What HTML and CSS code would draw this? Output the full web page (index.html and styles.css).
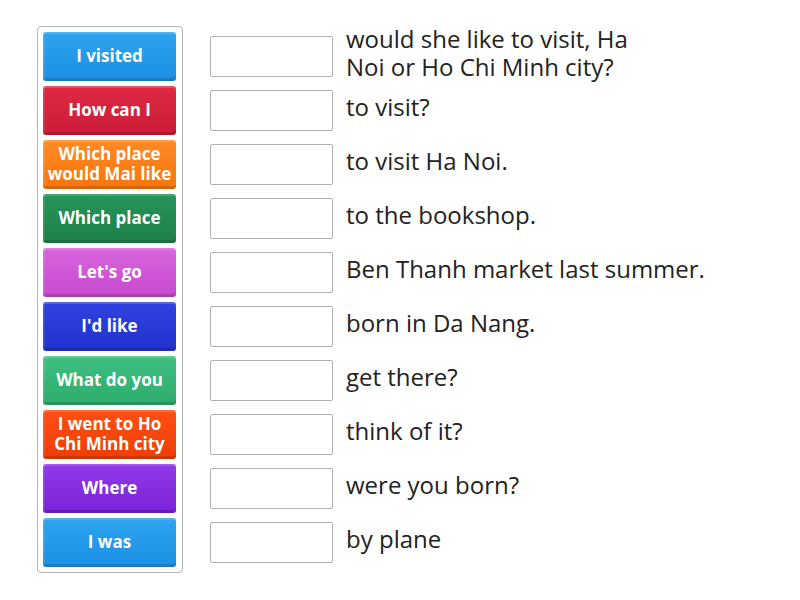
FILE: index.html
```html
<!DOCTYPE html>
<html>
<head>
<meta charset="utf-8">
<link rel="stylesheet" href="styles.css">
</head>
<body>
<div class="page">
  <div class="bank">
    <div class="tile blue">I visited</div>
    <div class="tile red">How can I</div>
    <div class="tile orange">Which place would Mai like</div>
    <div class="tile green">Which place</div>
    <div class="tile pink">Let's go</div>
    <div class="tile navy">I'd like</div>
    <div class="tile mint">What do you</div>
    <div class="tile flame">I went to Ho Chi Minh city</div>
    <div class="tile purple">Where</div>
    <div class="tile blue">I was</div>
  </div>
  <div class="rows">
    <div class="row"><div class="slot"></div><div class="phrase">would she like to visit, Ha<br>Noi or Ho Chi Minh city?</div></div>
    <div class="row"><div class="slot"></div><div class="phrase">to visit?</div></div>
    <div class="row"><div class="slot"></div><div class="phrase">to visit Ha Noi.</div></div>
    <div class="row"><div class="slot"></div><div class="phrase">to the bookshop.</div></div>
    <div class="row"><div class="slot"></div><div class="phrase">Ben Thanh market last summer.</div></div>
    <div class="row"><div class="slot"></div><div class="phrase">born in Da Nang.</div></div>
    <div class="row"><div class="slot"></div><div class="phrase">get there?</div></div>
    <div class="row"><div class="slot"></div><div class="phrase">think of it?</div></div>
    <div class="row"><div class="slot"></div><div class="phrase">were you born?</div></div>
    <div class="row"><div class="slot"></div><div class="phrase">by plane</div></div>
  </div>
</div>
</body>
</html>
```
FILE: styles.css
```css
html, body {
  margin: 0;
  padding: 0;
  background: #ffffff;
}
body {
  font-family: "Open Sans", "Liberation Sans", sans-serif;
  color: #222222;
}
.page {
  display: flex;
  align-items: flex-start;
  padding: 26px 0 0 37px;
}
.bank {
  display: flex;
  flex-direction: column;
  gap: 5px;
  padding: 5px 6px 5px 5px;
  border: 1px solid #b4b4b4;
  border-radius: 4px;
  width: 133px;
}
.tile {
  height: 49px;
  box-sizing: border-box;
  border-radius: 3px;
  display: flex;
  align-items: center;
  justify-content: center;
  text-align: center;
  color: #ffffff;
  font-weight: 700;
  font-size: 17px;
  line-height: 20px;
  padding: 0 2px 2px;
  box-shadow: inset 0 2px 0 rgba(255,255,255,0.18), inset 2px 0 0 rgba(255,255,255,0.10), inset 0 -3px 0 rgba(0,0,0,0.14);
}
.blue { background: linear-gradient(#2ea3ef, #1b90e4); }
.red { background: linear-gradient(#de2a44, #cb1b36); }
.orange { background: linear-gradient(#ff8a26, #f7750d); }
.green { background: linear-gradient(#27945a, #1c8048); }
.pink { background: linear-gradient(#d766dc, #c849cf); }
.navy { background: linear-gradient(#2f42df, #2132cd); }
.mint { background: linear-gradient(#3fc081, #2cab6d); }
.flame { background: linear-gradient(#ff4f14, #ee3e05); }
.purple { background: linear-gradient(#8f3ae8, #7a22d9); }
.rows {
  display: flex;
  flex-direction: column;
  gap: 5px;
  padding-top: 6px;
  margin-left: 27px;
}
.row {
  height: 49px;
  display: flex;
  align-items: center;
}
.slot {
  width: 123px;
  height: 41px;
  box-sizing: border-box;
  border: 1px solid #b0b0b0;
  border-radius: 2px;
  background: #ffffff;
  flex: none;
}
.phrase {
  margin-left: 13px;
  padding-bottom: 8px;
  font-size: 24px;
  line-height: 27.5px;
  color: #222222;
  white-space: nowrap;
}
```
